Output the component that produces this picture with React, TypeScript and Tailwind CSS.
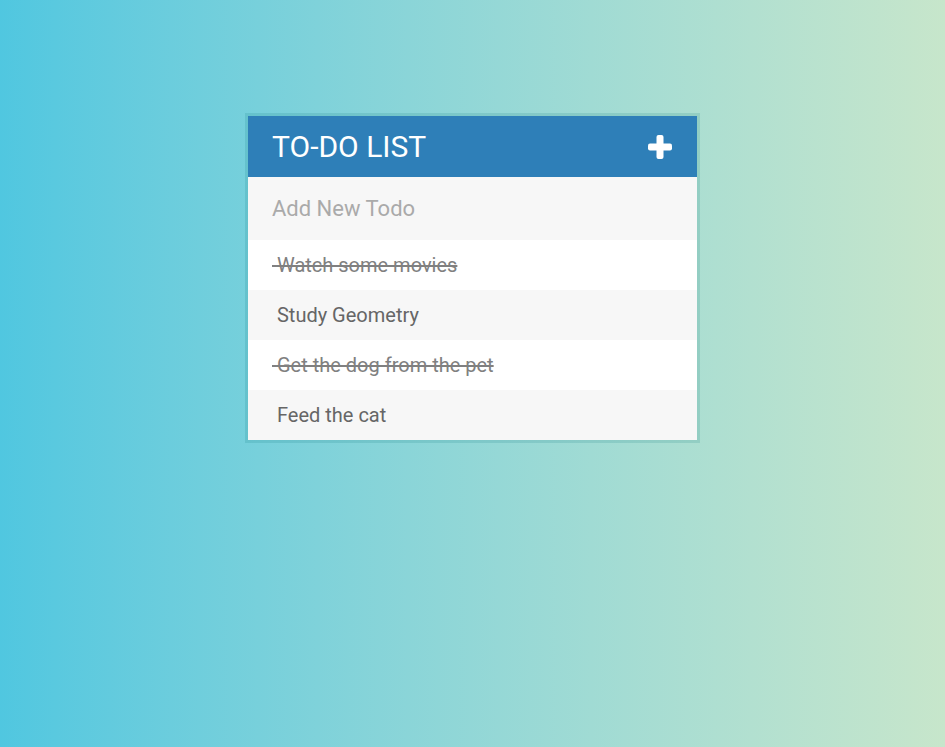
import React from 'react';

const todos = [
  { text: 'Watch some movies', done: true },
  { text: 'Study Geometry', done: false },
  { text: 'Get the dog from the pet', done: true },
  { text: 'Feed the cat', done: false },
];

const PlusIcon = () => (
  <svg width="24" height="24" viewBox="0 0 24 24" aria-hidden="true">
    <rect x="8.5" y="0" width="7" height="24" rx="2" fill="#fff" />
    <rect x="0" y="8.5" width="24" height="7" rx="2" fill="#fff" />
  </svg>
);

const App: React.FC = () => {
  return (
    <div
      className="min-h-[747px] w-full bg-gradient-to-r from-[#50c7e0] to-[#c7e6cb] pt-[113px]"
      style={{ fontFamily: 'Roboto, "Liberation Sans", sans-serif' }}
    >
      <div className="mx-auto w-[455px] border-[3px] border-[#0a6f78]/15">
        <div className="flex h-[61px] items-center justify-between bg-[#2e7fb8] pl-[24px] pr-[25px]">
          <h1 className="text-[30px] font-normal uppercase text-white">To-Do List</h1>
          <PlusIcon />
        </div>
        <div className="flex h-[63px] items-center bg-[#f7f7f7] px-[24px]">
          <input
            type="text"
            placeholder="Add New Todo"
            className="w-full bg-transparent text-[22px] text-[#666] outline-none placeholder:text-[#aaa]"
          />
        </div>
        <ul>
          {todos.map((todo, i) => (
            <li
              key={i}
              className={`flex h-[50px] items-center pl-[24px] text-[20px] text-[#666] ${
                i % 2 === 0 ? 'bg-white' : 'bg-[#f7f7f7]'
              }`}
            >
              <span className={todo.done ? 'line-through text-[#808080]' : ''}>
                {'\u00a0'}
                {todo.text}
              </span>
            </li>
          ))}
        </ul>
      </div>
    </div>
  );
};

export default App;
